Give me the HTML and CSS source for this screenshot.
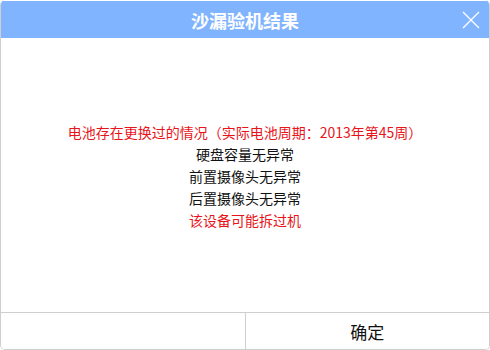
FILE: index.html
```html
<!DOCTYPE html>
<html lang="zh-CN">
<head>
    <meta charset="UTF-8">
    <title>沙漏验机结果</title>
    <link rel="stylesheet" href="styles.css">
</head>
<body>
    <div class="dialog">
        <div class="dialog-header">
            <span class="dialog-title">沙漏验机结果</span>
            <span class="dialog-close">
                <svg width="18" height="18" viewBox="0 0 18 18">
                    <path d="M1 1L17 17M17 1L1 17" stroke="#ffffff" stroke-width="1.3" fill="none"/>
                </svg>
            </span>
        </div>

        <div class="dialog-body">
            <div class="line warn">电池存在更换过的情况（实际电池周期：2013年第45周）</div>
            <div class="line">硬盘容量无异常</div>
            <div class="line">前置摄像头无异常</div>
            <div class="line">后置摄像头无异常</div>
            <div class="line warn">该设备可能拆过机</div>
        </div>

        <div class="dialog-footer">
            <button class="footer-btn"></button>
            <button class="footer-btn">确定</button>
        </div>
    </div>
</body>
</html>
```

FILE: styles.css
```css
html, body {
    margin: 0;
    padding: 0;
    background-color: #ffffff;
}

body {
    font-family: "Noto Sans CJK SC", "Noto Sans", sans-serif;
}

.dialog {
    width: 490px;
    height: 350px;
    box-sizing: border-box;
    border: 1px solid #cfcfcf;
    border-top: none;
    border-radius: 5px;
    overflow: hidden;
    display: flex;
    flex-direction: column;
    background-color: #ffffff;
}

.dialog-header {
    position: relative;
    height: 37px;
    margin-top: 1px;
    background-color: #80b4ff;
    display: flex;
    justify-content: center;
    align-items: center;
}

.dialog-title {
    color: #ffffff;
    font-size: 18px;
    font-weight: bold;
}

.dialog-close {
    position: absolute;
    right: 9px;
    top: 10px;
    width: 18px;
    height: 18px;
}

.dialog-close svg {
    display: block;
}

.dialog-body {
    flex: 1;
    display: flex;
    flex-direction: column;
    justify-content: center;
    align-items: center;
    padding-top: 2px;
}

.line {
    font-size: 14px;
    line-height: 22px;
    color: #111111;
}

.line.warn {
    color: #e8141a;
}

.dialog-footer {
    height: 36px;
    border-top: 1px solid #cfcfcf;
    display: flex;
}

.footer-btn {
    flex: 1;
    border: none;
    background-color: #ffffff;
    font-family: inherit;
    font-size: 17px;
    color: #111111;
    padding: 0;
    cursor: pointer;
}

.footer-btn + .footer-btn {
    border-left: 1px solid #cfcfcf;
}
```
